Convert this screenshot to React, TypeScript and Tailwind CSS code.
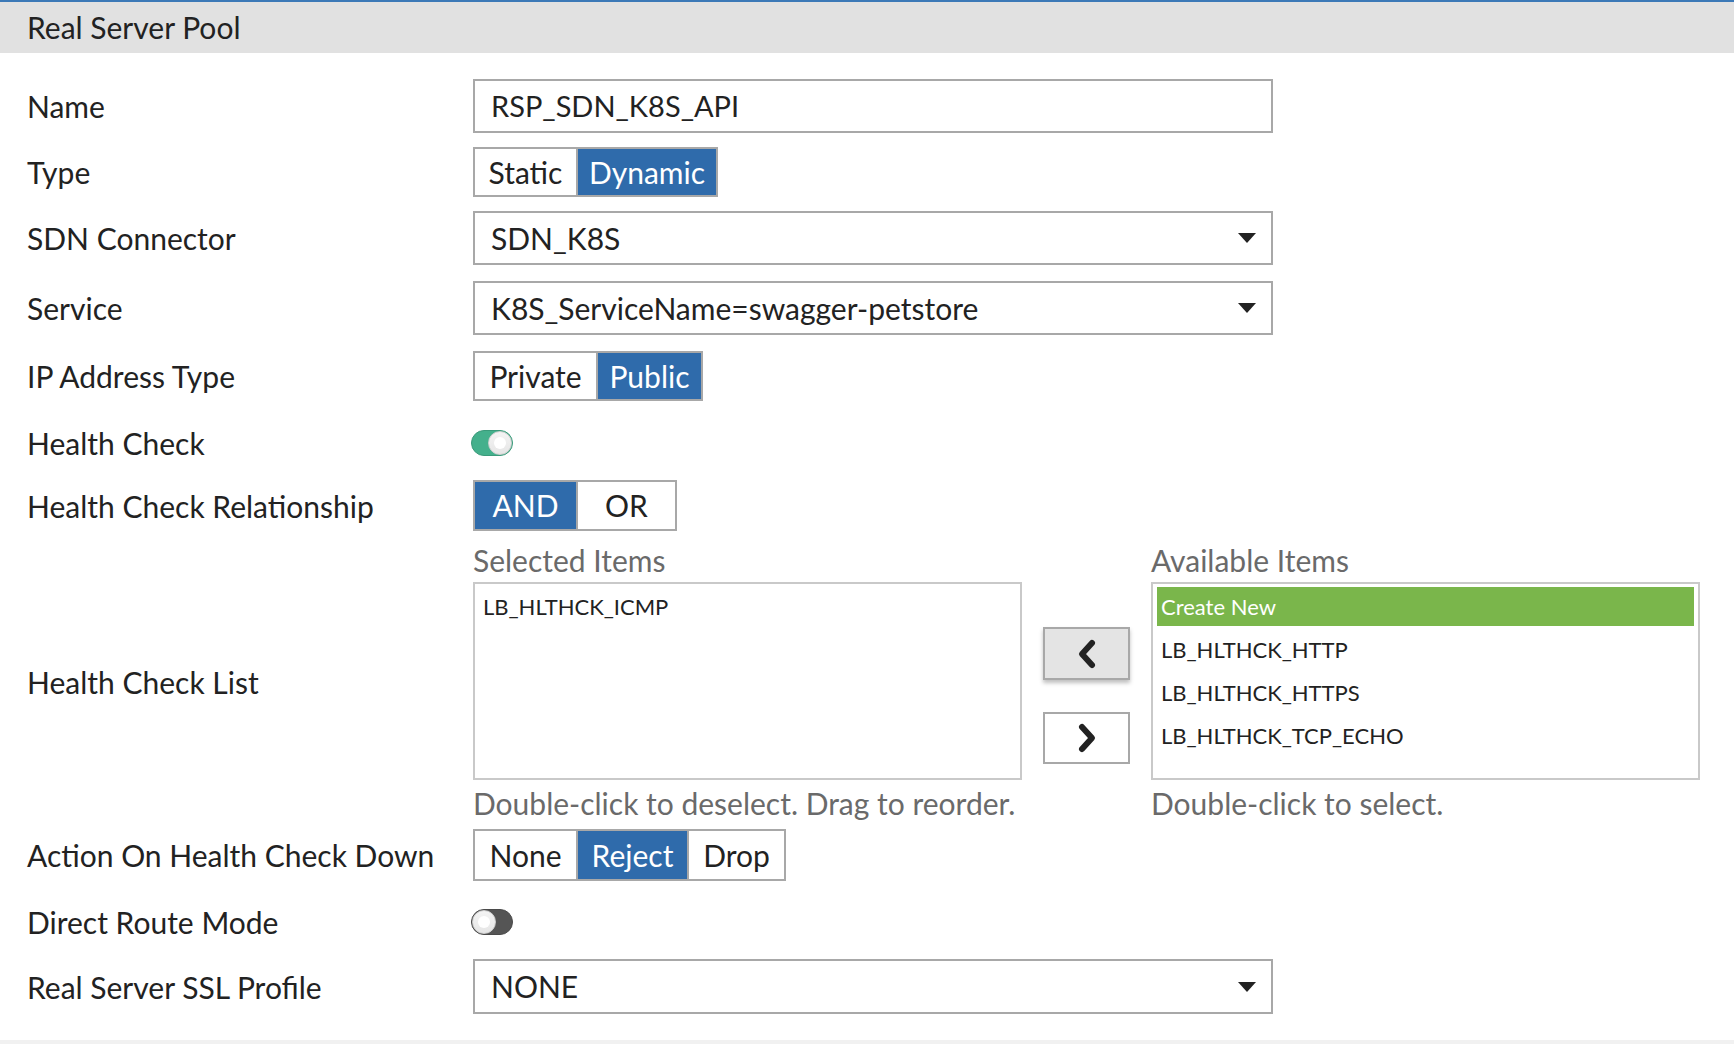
import React from "react";

const BLUE = "bg-[#2f6bab] text-white";

function Row({ label, className, children }: { label: string; className: string; children: React.ReactNode }) {
    return (
        <div className={"flex items-center " + className}>
            <div className="w-[446px] text-[30px] leading-none text-[#222]">{label}</div>
            {children}
        </div>
    );
}

function Segmented({ options }: { options: { text: string; width: string; active?: boolean }[] }) {
    return (
        <div className="flex h-full border-2 border-[#a8a8a8]">
            {options.map((o, i) => (
                <div
                    key={o.text}
                    className={
                        "flex items-center justify-center text-[30px] " +
                        o.width +
                        (i > 0 ? " border-l-2 border-[#a8a8a8]" : "") +
                        (o.active ? " " + BLUE : " bg-white text-[#222]")
                    }
                >
                    {o.text}
                </div>
            ))}
        </div>
    );
}

function Select({ value }: { value: string }) {
    return (
        <div className="flex items-center justify-between w-[800px] h-full border-2 border-[#a8a8a8] pl-[16px] pr-[15px] text-[30px] text-[#222]">
            <span>{value}</span>
            <svg width="18" height="10" viewBox="0 0 18 10">
                <path d="M0 0 H18 L9 10 Z" fill="#222" />
            </svg>
        </div>
    );
}

function Toggle({ on }: { on: boolean }) {
    return (
        <div
            className={
                "relative w-[42px] h-[26px] rounded-full " +
                (on ? "bg-[#44b08c] border border-[#3a9a7a]" : "bg-[#555] border border-[#4a4a4a]")
            }
        >
            <div
                className={
                    "absolute top-[0px] w-[24px] h-[24px] rounded-full bg-gradient-to-b from-[#f4f4f4] to-[#e6e6e6] border border-[#cfcfcf] " +
                    (on ? "right-[0px]" : "left-[0px]")
                }
            >
                <div className="absolute left-[5px] top-[5px] w-[12px] h-[12px] rounded-full bg-white" />
            </div>
        </div>
    );
}

function Chevron({ dir }: { dir: "left" | "right" }) {
    return (
        <svg width="24" height="32" viewBox="0 0 24 32">
            <polyline
                points={dir === "left" ? "17,5 7,16 17,27" : "7,5 17,16 7,27"}
                fill="none"
                stroke="#222"
                strokeWidth="6"
                strokeLinecap="round"
                strokeLinejoin="round"
            />
        </svg>
    );
}

export default function App() {
    const available = ["LB_HLTHCK_HTTP", "LB_HLTHCK_HTTPS", "LB_HLTHCK_TCP_ECHO"];

    return (
        <div className="w-[1734px] h-[1044px] flex flex-col bg-white font-['Lato',sans-serif] overflow-hidden">
            <div className="h-[53px] shrink-0 bg-[#e1e1e1] border-t-[2px] border-[#3c79b7] flex items-center pl-[27px] text-[30px] text-[#222]">
                Real Server Pool
            </div>

            <div className="pl-[27px] flex flex-col">
                <Row label="Name" className="mt-[26px] h-[54px]">
                    <div className="flex items-center w-[800px] h-full border-2 border-[#a8a8a8] pl-[16px] text-[29px] text-[#222]">
                        RSP_SDN_K8S_API
                    </div>
                </Row>

                <Row label="Type" className="mt-[14px] h-[50px]">
                    <Segmented
                        options={[
                            { text: "Static", width: "w-[101px]" },
                            { text: "Dynamic", width: "w-[140px]", active: true },
                        ]}
                    />
                </Row>

                <Row label="SDN Connector" className="mt-[14px] h-[54px]">
                    <Select value="SDN_K8S" />
                </Row>

                <Row label="Service" className="mt-[16px] h-[54px]">
                    <Select value="K8S_ServiceName=swagger-petstore" />
                </Row>

                <Row label="IP Address Type" className="mt-[16px] h-[50px]">
                    <Segmented
                        options={[
                            { text: "Private", width: "w-[121px]" },
                            { text: "Public", width: "w-[105px]", active: true },
                        ]}
                    />
                </Row>

                <Row label="Health Check" className="mt-[29px] h-[26px]">
                    <div className="-ml-[2px]">
                        <Toggle on />
                    </div>
                </Row>

                <Row label="Health Check Relationship" className="mt-[24px] h-[51px]">
                    <Segmented
                        options={[
                            { text: "AND", width: "w-[101px]", active: true },
                            { text: "OR", width: "w-[99px]" },
                        ]}
                    />
                </Row>

                <Row label="Health Check List" className="mt-[14px]">
                    <div className="flex">
                        <div className="w-[549px] flex flex-col">
                            <div className="h-[30px] leading-[30px] text-[30px] text-[#6a6a6a]">Selected Items</div>
                            <div className="mt-[7px] h-[198px] border-2 border-[#c9c9c9] pt-[3px] px-[4px]">
                                <div className="h-[39px] flex items-center px-[4px] text-[22px] text-[#222]">LB_HLTHCK_ICMP</div>
                            </div>
                            <div className="mt-[8px] h-[30px] leading-[30px] text-[30px] text-[#6a6a6a]">
                                Double-click to deselect. Drag to reorder.
                            </div>
                        </div>

                        <div className="ml-[21px] w-[87px] pt-[82px] flex flex-col gap-[32px]">
                            <div className="h-[53px] flex items-center justify-center bg-[#e4e4e4] border-2 border-[#a8a8a8] shadow-[0_3px_4px_rgba(0,0,0,0.25)]">
                                <Chevron dir="left" />
                            </div>
                            <div className="h-[52px] flex items-center justify-center bg-white border-2 border-[#a8a8a8]">
                                <Chevron dir="right" />
                            </div>
                        </div>

                        <div className="ml-[21px] w-[549px] flex flex-col">
                            <div className="h-[30px] leading-[30px] text-[30px] text-[#6a6a6a]">Available Items</div>
                            <div className="mt-[7px] h-[198px] border-2 border-[#c9c9c9] pt-[3px] px-[4px] flex flex-col gap-[4px]">
                                <div className="h-[39px] flex items-center px-[4px] text-[22px] bg-[#7ab64b] text-white">Create New</div>
                                {available.map((a) => (
                                    <div key={a} className="h-[39px] flex items-center px-[4px] text-[22px] text-[#222]">
                                        {a}
                                    </div>
                                ))}
                            </div>
                            <div className="mt-[8px] h-[30px] leading-[30px] text-[30px] text-[#6a6a6a]">Double-click to select.</div>
                        </div>
                    </div>
                </Row>

                <Row label="Action On Health Check Down" className="mt-[11px] h-[52px]">
                    <Segmented
                        options={[
                            { text: "None", width: "w-[101px]" },
                            { text: "Reject", width: "w-[111px]", active: true },
                            { text: "Drop", width: "w-[97px]" },
                        ]}
                    />
                </Row>

                <Row label="Direct Route Mode" className="mt-[28px] h-[26px]">
                    <div className="-ml-[2px]">
                        <Toggle on={false} />
                    </div>
                </Row>

                <Row label="Real Server SSL Profile" className="mt-[24px] h-[55px]">
                    <Select value="NONE" />
                </Row>
            </div>

            <div className="mt-auto h-[4px] bg-[#f1f1f1]" />
        </div>
    );
}
